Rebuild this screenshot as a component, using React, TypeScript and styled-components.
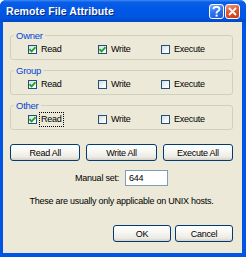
import React from 'react'
import styled, { createGlobalStyle } from 'styled-components'

const GlobalStyle = createGlobalStyle`
  html, body {
    margin: 0;
    padding: 0;
    background: #ffffff;
  }
  body {
    font-family: "Liberation Sans", Arial, sans-serif;
  }
`

const Window = styled.div`
  width: 246px;
  height: 257px;
  box-sizing: border-box;
  display: flex;
  flex-direction: column;
  background: #0055e5;
  border-radius: 6px 6px 0 0;
  overflow: hidden;
`

const TitleBar = styled.div`
  height: 22px;
  flex: none;
  display: flex;
  align-items: center;
  padding: 0 6px 0 6px;
  background: linear-gradient(180deg, #3d8bf5 0%, #0a5ee8 10%, #0058e6 45%, #0055e0 80%, #0048c8 100%);
`

const Title = styled.div`
  flex: 1;
  color: #ffffff;
  font-weight: 700;
  font-size: 10.5px;
  letter-spacing: 0.1px;
  text-shadow: 1px 1px 0 #0a2a80;
`

const CaptionButton = styled.div<{ danger?: boolean }>`
  width: 15px;
  height: 15px;
  box-sizing: border-box;
  margin-left: 1px;
  border: 1px solid #ffffff;
  border-radius: 3px;
  display: flex;
  align-items: center;
  justify-content: center;
  background: ${p => p.danger
    ? 'linear-gradient(160deg, #f39b7d 0%, #e2582f 45%, #c83c12 100%)'
    : 'linear-gradient(160deg, #7fb1ff 0%, #2f77f0 45%, #1a55d6 100%)'};
`

const Body = styled.div`
  flex: 1;
  margin: 0 4px 4px 3px;
  background: #ece9d8;
  display: flex;
  flex-direction: column;
  padding: 8px 9px 11px 7px;
  font-size: 9px;
  letter-spacing: -0.25px;
  color: #000000;
`

const Groups = styled.div`
  display: flex;
  flex-direction: column;
  gap: 5px;
`

const Group = styled.fieldset`
  margin: 0;
  padding: 1px 0 5px 3px;
  border: 1px solid #d0d0bf;
  border-radius: 3px;
  min-width: 0;
`

const Legend = styled.legend`
  color: #0046d5;
  font-size: 9.5px;
  line-height: 11px;
  padding: 0 2px;
`

const Row = styled.div`
  display: grid;
  grid-template-columns: 70px 63px auto;
  height: 12px;
  margin-left: 14px;
  align-items: center;
`

const Check = styled.label`
  display: flex;
  align-items: center;
  gap: 2px;
  line-height: 11px;
`

const Box = styled.span`
  width: 9px;
  height: 9px;
  box-sizing: border-box;
  border: 1px solid #1c5180;
  background: linear-gradient(135deg, #dcdcd7 0%, #f5f5f1 60%, #ffffff 100%);
  display: flex;
  align-items: center;
  justify-content: center;
`

const CheckText = styled.span<{ focused?: boolean }>`
  padding: 1px 1px;
  border: 1px dotted ${p => (p.focused ? '#000000' : 'transparent')};
`

const ButtonRow = styled.div`
  display: grid;
  grid-template-columns: 1fr 1fr 1fr;
  gap: 6px;
  margin-top: 14px;
`

const Button = styled.div<{ w?: number }>`
  height: 17px;
  box-sizing: border-box;
  ${p => (p.w ? `width: ${p.w}px;` : '')}
  border: 1px solid #003c74;
  border-radius: 3px;
  background: linear-gradient(180deg, #ffffff 0%, #f6f6f2 45%, #ecebe5 80%, #d6d0c5 100%);
  display: flex;
  align-items: center;
  justify-content: center;
`

const ManualRow = styled.div`
  display: flex;
  align-items: center;
  justify-content: center;
  gap: 6px;
  margin-top: 9px;
`

const Input = styled.div`
  width: 43px;
  height: 16px;
  box-sizing: border-box;
  border: 1px solid #7f9db9;
  background: #ffffff;
  padding-left: 3px;
  display: flex;
  align-items: center;
`

const Note = styled.div`
  text-align: center;
  margin-top: 10px;
`

const Footer = styled.div`
  margin-top: auto;
  display: flex;
  justify-content: flex-end;
  gap: 4px;
`

const Tick = () => (
  <svg width="7" height="7" viewBox="0 0 7 7">
    <path d="M0.5 3.2 L2.6 5.4 L6.5 1.2" fill="none" stroke="#21a121" strokeWidth="1.8" />
  </svg>
)

const CheckItem: React.FC<{ label: string; checked?: boolean; focused?: boolean }> = ({ label, checked, focused }) => (
  <Check>
    <Box>{checked && <Tick />}</Box>
    <CheckText focused={focused}>{label}</CheckText>
  </Check>
)

const groups = [
  { name: 'Owner', read: true, write: true, exec: false },
  { name: 'Group', read: true, write: false, exec: false },
  { name: 'Other', read: true, write: false, exec: false, focus: true },
]

export default function App() {
  return (
    <>
      <GlobalStyle />
      <Window>
        <TitleBar>
          <Title>Remote File Attribute</Title>
          <CaptionButton>
            <svg width="9" height="11" viewBox="0 0 9 11">
              <path d="M1.5 3.2 C1.5 1.4 3 0.8 4.5 0.8 C6.2 0.8 7.5 1.8 7.5 3.2 C7.5 4.8 5.2 5 4.6 6.5 L4.6 7.4" fill="none" stroke="#fff" strokeWidth="1.8" />
              <rect x="3.6" y="8.6" width="2" height="2" fill="#fff" />
            </svg>
          </CaptionButton>
          <CaptionButton danger>
            <svg width="9" height="9" viewBox="0 0 9 9">
              <path d="M1 1 L8 8 M8 1 L1 8" stroke="#fff" strokeWidth="1.8" />
            </svg>
          </CaptionButton>
        </TitleBar>
        <Body>
          <Groups>
            {groups.map(g => (
              <Group key={g.name}>
                <Legend>{g.name}</Legend>
                <Row>
                  <CheckItem label="Read" checked={g.read} focused={g.focus} />
                  <CheckItem label="Write" checked={g.write} />
                  <CheckItem label="Execute" checked={g.exec} />
                </Row>
              </Group>
            ))}
          </Groups>
          <ButtonRow>
            <Button>Read All</Button>
            <Button>Write All</Button>
            <Button>Execute All</Button>
          </ButtonRow>
          <ManualRow>
            <span>Manual set:</span>
            <Input>644</Input>
          </ManualRow>
          <Note>These are usually only applicable on UNIX hosts.</Note>
          <Footer>
            <Button w={58}>OK</Button>
            <Button w={58}>Cancel</Button>
          </Footer>
        </Body>
      </Window>
    </>
  )
}
